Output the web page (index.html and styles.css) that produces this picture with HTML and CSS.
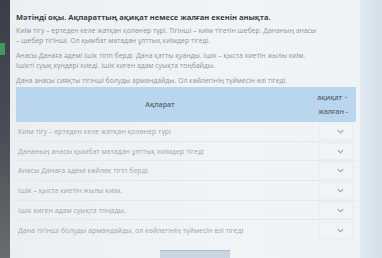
FILE: index.html
```html
<!DOCTYPE html>
<html lang="kk">
<head>
<meta charset="utf-8">
<link rel="stylesheet" href="styles.css">
</head>
<body>
<div class="screen">
  <div class="bezel"><div class="tab"></div></div>
  <div class="card">
    <h1 class="title">Мәтінді оқы. Ақпараттың ақиқат немесе жалған екенін анықта.</h1>
    <p class="para">Киім тігу – ертеден келе жатқан қолөнер түрі. Тігінші – киім тігетін шебер. Дананың анасы<br>– шебер тігінші. Ол қымбат матадан ұлттық киімдер тігеді.</p>
    <p class="para">Анасы Данаға әдемі ішік тігіп берді. Дана қатты қуанды. Ішік – қыста киетін жылы киім.<br>Ішікті суық күндері киеді. Ішік киген адам суықта тоңбайды.</p>
    <p class="para last">Дана анасы сияқты тігінші болуды армандайды. Ол көйлегінің түймесін өзі тігеді.</p>
    <div class="table">
      <div class="head">
        <div class="head-info">Ақпарат</div>
        <div class="head-val"><span>ақиқат <span class="sign">+</span></span><span>жалған -</span></div>
      </div>
      <div class="row"><div class="cell">Киім тігу – ертеден келе жатқан қолөнер түрі</div><div class="sel"><svg viewBox="0 0 8 5" class="chev"><path d="M1 1l3 3 3-3"/></svg></div></div>
      <div class="row"><div class="cell">Дананың анасы қымбат матадан ұлттық киімдер тігеді</div><div class="sel"><svg viewBox="0 0 8 5" class="chev"><path d="M1 1l3 3 3-3"/></svg></div></div>
      <div class="row"><div class="cell">Анасы Данаға әдемі көйлек тігіп берді.</div><div class="sel"><svg viewBox="0 0 8 5" class="chev"><path d="M1 1l3 3 3-3"/></svg></div></div>
      <div class="row"><div class="cell">Ішік – қыста киетін жылы киім.</div><div class="sel"><svg viewBox="0 0 8 5" class="chev"><path d="M1 1l3 3 3-3"/></svg></div></div>
      <div class="row"><div class="cell">Ішік киген адам суықта тоңады.</div><div class="sel"><svg viewBox="0 0 8 5" class="chev"><path d="M1 1l3 3 3-3"/></svg></div></div>
      <div class="row last"><div class="cell">Дана тігінші болуды армандайды, ол көйлегінің түймесін өзі тігеді</div><div class="sel"><svg viewBox="0 0 8 5" class="chev"><path d="M1 1l3 3 3-3"/></svg></div></div>
    </div>
    <div class="btn-wrap"><div class="btn"></div></div>
  </div>
  <div class="side"></div>
</div>
</body>
</html>
```
FILE: styles.css
```css
html, body {
  margin: 0;
  padding: 0;
  width: 382px;
  height: 258px;
  overflow: hidden;
  background: #d6e3ed;
}
.screen {
  display: flex;
  width: 382px;
  height: 258px;
  font-family: "Open Sans", "Liberation Sans", sans-serif;
}
.bezel {
  width: 10px;
  flex: none;
  background: linear-gradient(180deg, #3b3e46 0%, #4a4c55 50%, #6b6b72 100%);
  padding-top: 43px;
}
.tab {
  width: 5px;
  height: 12px;
  background: #3f9a5c;
}
.card {
  width: 350px;
  flex: none;
  background: linear-gradient(90deg, #eceff1 0%, #f1f4f6 60%, #eef3f7 100%);
  padding: 11px 6px 0 6px;
  box-sizing: border-box;
}
.side {
  flex: 1;
  background: linear-gradient(90deg, #e0e9f0 0%, #d2e0eb 100%);
}
.title {
  margin: 0 0 3px 0;
  font-size: 7.5px;
  line-height: 12px;
  font-weight: 700;
  color: #3a3f44;
}
.para {
  margin: 0 0 5px 0;
  font-size: 6.85px;
  line-height: 10px;
  color: #8e969c;
  white-space: nowrap;
}
.para.last {
  margin-bottom: 1px;
}
.table {
  width: 340px;
}
.head {
  display: flex;
  height: 35px;
  background: #bad5ee;
}
.head-info {
  flex: 1;
  display: flex;
  align-items: center;
  justify-content: center;
  font-size: 7px;
  font-weight: 600;
  color: #5a6670;
}
.head-val {
  width: 44px;
  display: flex;
  flex-direction: column;
  justify-content: center;
  align-items: flex-end;
  padding-right: 8px;
  gap: 5px;
  font-size: 7px;
  font-weight: 600;
  color: #5a6670;
}
.sign {
  color: #8fa6bd;
}
.row {
  display: flex;
  height: 19.7px;
  border-bottom: 1px solid #e3e8ec;
  box-sizing: border-box;
  align-items: center;
}
.row.last {
  border-bottom: none;
}
.cell {
  flex: 1;
  font-size: 7px;
  color: #a0a7ad;
  padding-left: 2px;
}
.sel {
  width: 34px;
  height: 17px;
  margin-right: 3px;
  border: 1px solid #e9edf0;
  box-sizing: border-box;
  display: flex;
  align-items: center;
  justify-content: flex-end;
  padding-right: 8px;
  background: #f1f4f6;
}
.chev {
  width: 7px;
  height: 5px;
  fill: none;
  stroke: #97a2ac;
  stroke-width: 1.3;
}
.btn-wrap {
  display: flex;
  justify-content: center;
  padding-top: 10px;
  padding-left: 20px;
}
.btn {
  width: 70px;
  height: 8px;
  background: #c9d6e2;
  border-top: 1px solid #aebccb;
}
```
